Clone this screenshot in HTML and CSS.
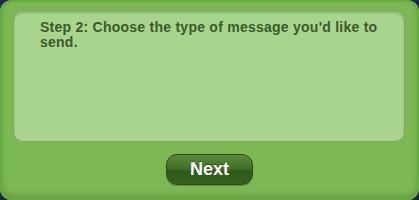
FILE: index.html
```html
<!DOCTYPE html>
<html>
    <head>
        <title>Step 2</title>
    <link rel="stylesheet" href="styles.css">
    </head>
    <body>
        <div class="panel">
            <div class="message-box">
                <p class="step">Step 2: Choose the type of message you'd like to send.</p>
            </div>
            <div class="actions">
                <div class="next-button">Next</div>
            </div>
        </div>
    </body>
</html>
```

FILE: styles.css
```css
html, body {
    margin: 0;
    padding: 0;
    background-color: #1c2a4a;
}
body {
    width: 419px;
    height: 200px;
    font-family: "Liberation Sans", Arial, sans-serif;
}
.panel {
    box-sizing: border-box;
    width: 419px;
    height: 200px;
    border-radius: 12px;
    background-color: #7cb854;
    box-shadow: inset 0 0 0 2px #6aaa42, inset 0 -6px 6px -2px #5e9a3a, inset 5px 0 6px -3px #6aa845, inset -5px 0 6px -3px #6aa845;
    padding: 10px 14px 0 13px;
}
.message-box {
    box-sizing: border-box;
    height: 132px;
    border: 1px solid #86a265;
    border-radius: 10px;
    background-color: #a9d48d;
    box-shadow: inset 0 2px 2px rgba(90, 120, 60, 0.35);
    padding: 9px 20px 0 26px;
}
.step {
    margin: 0;
    font-size: 14px;
    font-weight: bold;
    line-height: 15px;
    letter-spacing: 0.25px;
    color: #3b5a2c;
}
.actions {
    display: flex;
    justify-content: center;
    padding-top: 12px;
    padding-left: 1px;
}
.next-button {
    box-sizing: border-box;
    width: 87px;
    height: 31px;
    border-radius: 11px;
    border: 1px solid #2c4a1c;
    background: linear-gradient(#5c8a3a 0%, #3f6c26 50%, #2e5a1a 52%, #355f20 100%);
    box-shadow: 0 1px 1px rgba(60, 100, 30, 0.5);
    color: #ffffff;
    font-size: 18px;
    font-weight: bold;
    line-height: 29px;
    text-align: center;
    text-shadow: 0 -1px 0 rgba(0, 0, 0, 0.4);
}
```
